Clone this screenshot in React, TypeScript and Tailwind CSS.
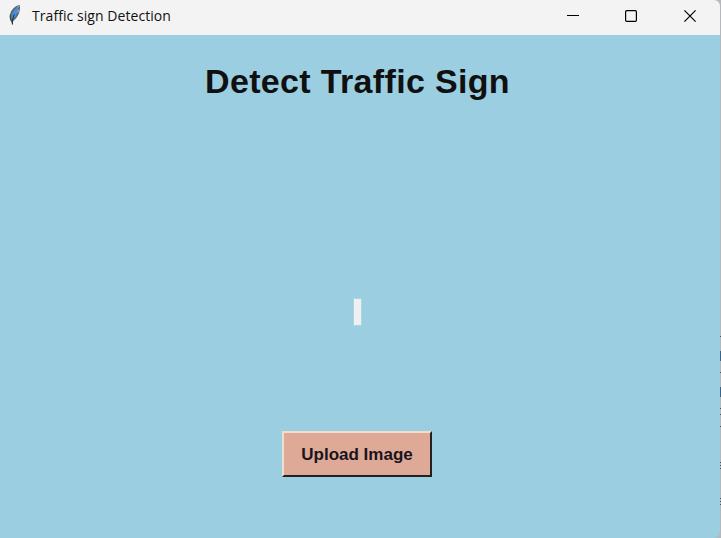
import React from "react";

const edgeMarks = [
  { top: 336, height: 1, color: "#4a5363" },
  { top: 351, height: 10, color: "#3b6287" },
  { top: 372, height: 1, color: "#4a5363" },
  { top: 387, height: 10, color: "#3b6287" },
  { top: 408, height: 1, color: "#4a5363" },
  { top: 414, height: 1, color: "#4a5363" },
  { top: 426, height: 1, color: "#4a5363" },
  { top: 462, height: 1, color: "#4a5363" },
  { top: 465, height: 1, color: "#4a5363" },
  { top: 468, height: 1, color: "#4a5363" },
  { top: 498, height: 1, color: "#4a5363" },
  { top: 501, height: 1, color: "#4a5363" },
  { top: 504, height: 1, color: "#4a5363" },
];

function FeatherIcon() {
  return (
    <svg width="16" height="22" viewBox="0 0 16 22" className="block">
      <path d="M12.6 1C9 1.5 5.3 4.5 3.6 8.5C2.5 11.5 2.7 14.5 3.7 16.8L5.4 20.5L6.2 17C9 15 11.2 12 12.2 8.5C13 6 13.4 3 12.6 1Z" fill="#5f676f" />
      <path d="M11.5 2.8C8.6 4.2 5.6 7.5 4.6 11L4.4 14.5L6.4 14.8C9.4 12 11.4 7.5 11.5 2.8Z" fill="#4590e2" />
      <path d="M12.2 2L9.8 3.6M11.8 6L10.6 8.5" stroke="#aab3bc" strokeWidth="1" />
      <path d="M7.2 10.5C6 13.5 5.5 16.5 5.3 20.6" fill="none" stroke="#1c2836" strokeWidth="1" />
      <path d="M3.3 10.5L3.2 14L4.6 17.5" fill="none" stroke="#333a41" strokeWidth="0.9" />
    </svg>
  );
}

function TitleBar() {
  return (
    <header className="flex h-[35px] shrink-0 items-start justify-between bg-[#f3f3f3] pl-[7px]">
      <div className="flex items-start pt-1">
        <FeatherIcon />
        <span className="ml-[9px] mt-px whitespace-nowrap font-['Open_Sans','Noto_Sans',sans-serif] text-[14px] leading-[22px] tracking-[0.06px] text-[#111]">
          Traffic sign Detection
        </span>
      </div>
      <div className="flex h-8 text-black">
        <button className="flex w-[58px] items-center justify-center" aria-label="Minimize">
          <svg width="12" height="12" viewBox="0 0 12 12"><path d="M0 5.5H12" stroke="currentColor" /></svg>
        </button>
        <button className="flex w-[58px] items-center justify-center" aria-label="Maximize">
          <svg width="12" height="12" viewBox="0 0 12 12"><rect x=".6" y=".6" width="10.8" height="10.8" rx="1.2" fill="none" stroke="currentColor" strokeWidth="1.2" /></svg>
        </button>
        <button className="flex w-[60px] items-center justify-center" aria-label="Close">
          <svg width="12" height="12" viewBox="0 0 12 12"><path d="M.4.4L11.6 11.6M11.6.4L.4 11.6" stroke="currentColor" strokeWidth="1.2" /></svg>
        </button>
      </div>
    </header>
  );
}

export default function App() {
  return (
    <div className="relative h-[538px] w-[721px] overflow-hidden bg-[#b5b8bb]">
      <div className="flex h-full w-[720px] flex-col overflow-hidden rounded-r-[6px] bg-[#9acee0]">
        <TitleBar />
        <main className="flex flex-1 flex-col items-start font-['Liberation_Sans',Arial,sans-serif] font-bold">
          <h1 className="ml-[205px] mt-[26px] whitespace-nowrap text-[34px] leading-[40px] tracking-[0.34px] text-[#101010]">
            Detect Traffic Sign
          </h1>
          <div className="ml-[353px] mt-[197px] h-[28px] w-[9px] border border-[#a9d5e3] bg-[#f0f0f0]" />
          <button className="ml-[282px] mt-[105px] flex h-[46px] w-[150px] items-center justify-center whitespace-nowrap border-2 border-b-[#23201f] border-l-[#f1ddce] border-r-[#23201f] border-t-[#f1ddce] bg-[#dfa998] pt-[2px] text-[17px] leading-5 text-[#19151c]">
            Upload Image
          </button>
        </main>
      </div>
      {edgeMarks.map((mark) => (
        <div key={mark.top} className="absolute right-0 w-px" style={{ top: mark.top, height: mark.height, backgroundColor: mark.color }} />
      ))}
    </div>
  );
}
